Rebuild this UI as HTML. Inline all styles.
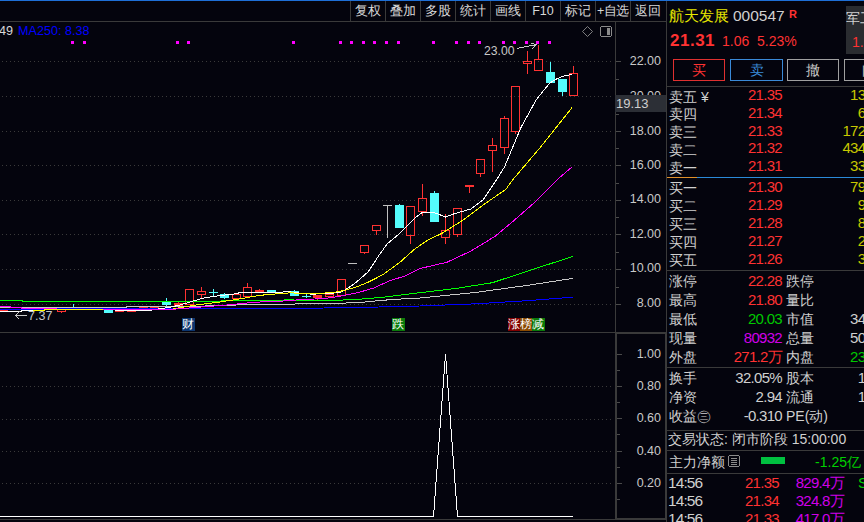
<!DOCTYPE html>
<html><head><meta charset="utf-8">
<style>
*{margin:0;padding:0;box-sizing:border-box}
html,body{width:864px;height:522px;overflow:hidden;background:#04040d;font-family:"Liberation Sans",sans-serif;color:#d0d0d0}
.a{position:absolute;white-space:nowrap;line-height:1}
.tb{position:absolute;top:1px;height:20px;width:35px;border-left:1px solid #3a3a3a;font-size:12.5px;line-height:20px;text-align:center;color:#d8d8d8}
.lbl{position:absolute;font-size:14px;line-height:18px;color:#d0d0d0}
.ax{position:absolute;font-size:12.5px;line-height:13px;color:#c8c8c8;text-align:right;width:40px}
.red{color:#ff3232}.grn{color:#00e000}.yel{color:#e0e000}.pur{color:#c000ff}
</style></head><body>
<svg width="864" height="522" style="position:absolute;left:0;top:0" shape-rendering="crispEdges">
<rect x="0" y="0" width="864" height="1" fill="#1e6fd6"/>
<rect x="0" y="21" width="666" height="1" fill="#3a3a3a"/>
<rect x="615" y="22" width="1" height="498" fill="#3a3a3a"/>
<rect x="0" y="332" width="666" height="1" fill="#3a3a3a"/>
<rect x="615" y="333" width="51" height="1" fill="#3a3a3a"/>
<rect x="616" y="333" width="1" height="186" fill="#3a3a3a"/>
<rect x="665" y="333" width="1" height="186" fill="#3a3a3a"/>
<rect x="0" y="519" width="666" height="1" fill="#3a3a3a"/>
<rect x="616" y="518" width="50" height="1" fill="#3a3a3a"/>
<rect x="666" y="1" width="1" height="521" fill="#3a3a3a"/>
<line x1="0" y1="61.5" x2="612" y2="61.5" stroke="#3a3a3a" stroke-width="1" stroke-dasharray="1 3" stroke-dashoffset="-2"/>
<line x1="0" y1="96.5" x2="612" y2="96.5" stroke="#3a3a3a" stroke-width="1" stroke-dasharray="1 3" stroke-dashoffset="-2"/>
<line x1="0" y1="131.5" x2="612" y2="131.5" stroke="#3a3a3a" stroke-width="1" stroke-dasharray="1 3" stroke-dashoffset="-2"/>
<line x1="0" y1="165.5" x2="612" y2="165.5" stroke="#3a3a3a" stroke-width="1" stroke-dasharray="1 3" stroke-dashoffset="-2"/>
<line x1="0" y1="200.5" x2="612" y2="200.5" stroke="#3a3a3a" stroke-width="1" stroke-dasharray="1 3" stroke-dashoffset="-2"/>
<line x1="0" y1="234.5" x2="612" y2="234.5" stroke="#3a3a3a" stroke-width="1" stroke-dasharray="1 3" stroke-dashoffset="-2"/>
<line x1="0" y1="269.5" x2="612" y2="269.5" stroke="#3a3a3a" stroke-width="1" stroke-dasharray="1 3" stroke-dashoffset="-2"/>
<line x1="0" y1="304.5" x2="612" y2="304.5" stroke="#3a3a3a" stroke-width="1" stroke-dasharray="1 3" stroke-dashoffset="-2"/>
<line x1="0" y1="386.5" x2="612" y2="386.5" stroke="#3a3a3a" stroke-width="1" stroke-dasharray="1 3" stroke-dashoffset="-2"/>
<line x1="0" y1="419.5" x2="612" y2="419.5" stroke="#3a3a3a" stroke-width="1" stroke-dasharray="1 3" stroke-dashoffset="-2"/>
<line x1="0" y1="451.5" x2="612" y2="451.5" stroke="#3a3a3a" stroke-width="1" stroke-dasharray="1 3" stroke-dashoffset="-2"/>
<line x1="0" y1="483.5" x2="612" y2="483.5" stroke="#3a3a3a" stroke-width="1" stroke-dasharray="1 3" stroke-dashoffset="-2"/>
<rect x="616" y="61" width="5" height="1" fill="#4a4a4a"/>
<rect x="616" y="96" width="5" height="1" fill="#4a4a4a"/>
<rect x="616" y="131" width="5" height="1" fill="#4a4a4a"/>
<rect x="616" y="165" width="5" height="1" fill="#4a4a4a"/>
<rect x="616" y="200" width="5" height="1" fill="#4a4a4a"/>
<rect x="616" y="234" width="5" height="1" fill="#4a4a4a"/>
<rect x="616" y="269" width="5" height="1" fill="#4a4a4a"/>
<rect x="616" y="304" width="5" height="1" fill="#4a4a4a"/>
<rect x="616" y="79" width="3" height="1" fill="#4a4a4a"/>
<rect x="616" y="114" width="3" height="1" fill="#4a4a4a"/>
<rect x="616" y="148" width="3" height="1" fill="#4a4a4a"/>
<rect x="616" y="183" width="3" height="1" fill="#4a4a4a"/>
<rect x="616" y="217" width="3" height="1" fill="#4a4a4a"/>
<rect x="616" y="252" width="3" height="1" fill="#4a4a4a"/>
<rect x="616" y="287" width="3" height="1" fill="#4a4a4a"/>
<rect x="617" y="354" width="5" height="1" fill="#4a4a4a"/>
<rect x="617" y="370" width="3" height="1" fill="#4a4a4a"/>
<rect x="617" y="386" width="5" height="1" fill="#4a4a4a"/>
<rect x="617" y="402" width="3" height="1" fill="#4a4a4a"/>
<rect x="617" y="418" width="5" height="1" fill="#4a4a4a"/>
<rect x="617" y="434" width="3" height="1" fill="#4a4a4a"/>
<rect x="617" y="451" width="5" height="1" fill="#4a4a4a"/>
<rect x="617" y="467" width="3" height="1" fill="#4a4a4a"/>
<rect x="617" y="483" width="5" height="1" fill="#4a4a4a"/>
<rect x="617" y="499" width="3" height="1" fill="#4a4a4a"/>
<rect x="71" y="41" width="3" height="3" fill="#ff00ff"/>
<rect x="83" y="41" width="3" height="3" fill="#ff00ff"/>
<rect x="176" y="41" width="3" height="3" fill="#ff00ff"/>
<rect x="187" y="41" width="3" height="3" fill="#ff00ff"/>
<rect x="292" y="41" width="3" height="3" fill="#ff00ff"/>
<rect x="339" y="41" width="3" height="3" fill="#ff00ff"/>
<rect x="350" y="41" width="3" height="3" fill="#ff00ff"/>
<rect x="362" y="41" width="3" height="3" fill="#ff00ff"/>
<rect x="373" y="41" width="3" height="3" fill="#ff00ff"/>
<rect x="385" y="41" width="3" height="3" fill="#ff00ff"/>
<rect x="397" y="41" width="3" height="3" fill="#ff00ff"/>
<rect x="432" y="41" width="3" height="3" fill="#ff00ff"/>
<rect x="455" y="41" width="3" height="3" fill="#ff00ff"/>
<rect x="467" y="41" width="3" height="3" fill="#ff00ff"/>
<rect x="478" y="41" width="3" height="3" fill="#ff00ff"/>
<rect x="502" y="41" width="3" height="3" fill="#ff00ff"/>
<rect x="513" y="41" width="3" height="3" fill="#ff00ff"/>
<rect x="525" y="41" width="3" height="3" fill="#ff00ff"/>
<rect x="536" y="41" width="3" height="3" fill="#ff00ff"/>
<rect x="548" y="41" width="3" height="3" fill="#ff00ff"/>
<rect x="-1" y="309" width="9" height="3" fill="#ff3232"/>
<rect x="22" y="308" width="9" height="2" fill="#ff3232"/>
<rect x="61" y="312" width="1" height="1" fill="#ff3232"/>
<rect x="57.5" y="309.5" width="8" height="2" fill="none" stroke="#ff3232" stroke-width="1"/>
<rect x="73" y="304" width="1" height="2" fill="#54fcfc"/>
<rect x="73" y="304" width="1" height="3" fill="#54fcfc"/>
<rect x="104" y="310" width="9" height="3" fill="#54fcfc"/>
<rect x="115" y="311" width="9" height="1" fill="#ff3232"/>
<rect x="127" y="311" width="9" height="1" fill="#ff3232"/>
<rect x="139" y="307" width="9" height="1" fill="#ff3232"/>
<rect x="150" y="307" width="9" height="1" fill="#ff3232"/>
<rect x="166" y="298" width="1" height="4" fill="#54fcfc"/>
<rect x="166" y="305" width="1" height="1" fill="#54fcfc"/>
<rect x="162" y="302" width="9" height="3" fill="#54fcfc"/>
<rect x="178" y="302" width="1" height="1" fill="#ff3232"/>
<rect x="174" y="303" width="9" height="3" fill="#ff3232"/>
<rect x="185.5" y="289.5" width="8" height="15" fill="none" stroke="#ff3232" stroke-width="1"/>
<rect x="201" y="287" width="1" height="4" fill="#ff3232"/>
<rect x="201" y="295" width="1" height="3" fill="#ff3232"/>
<rect x="197.5" y="291.5" width="8" height="3" fill="none" stroke="#ff3232" stroke-width="1"/>
<rect x="213" y="289" width="1" height="3" fill="#54fcfc"/>
<rect x="213" y="293" width="1" height="3" fill="#54fcfc"/>
<rect x="209" y="292" width="9" height="1" fill="#54fcfc"/>
<rect x="224" y="293" width="1" height="1" fill="#54fcfc"/>
<rect x="224" y="298" width="1" height="1" fill="#54fcfc"/>
<rect x="220" y="294" width="9" height="4" fill="#54fcfc"/>
<rect x="232.5" y="294.5" width="8" height="4" fill="none" stroke="#ff3232" stroke-width="1"/>
<rect x="247" y="283" width="1" height="4" fill="#ff3232"/>
<rect x="243.5" y="287.5" width="8" height="9" fill="none" stroke="#ff3232" stroke-width="1"/>
<rect x="259" y="289" width="1" height="1" fill="#ff3232"/>
<rect x="255" y="290" width="9" height="3" fill="#ff3232"/>
<rect x="267" y="290" width="9" height="3" fill="#54fcfc"/>
<rect x="294" y="290" width="1" height="1" fill="#54fcfc"/>
<rect x="290" y="291" width="9" height="5" fill="#54fcfc"/>
<rect x="306" y="294" width="1" height="2" fill="#54fcfc"/>
<rect x="306" y="297" width="1" height="1" fill="#54fcfc"/>
<rect x="302" y="296" width="9" height="1" fill="#54fcfc"/>
<rect x="317" y="298" width="1" height="2" fill="#ff3232"/>
<rect x="313" y="295" width="9" height="3" fill="#ff3232"/>
<rect x="325.5" y="294.5" width="8" height="2" fill="none" stroke="#ff3232" stroke-width="1"/>
<rect x="337.5" y="279.5" width="8" height="16" fill="none" stroke="#ff3232" stroke-width="1"/>
<rect x="348" y="263" width="9" height="1" fill="#c0c0c0"/>
<rect x="364" y="253" width="1" height="1" fill="#ff3232"/>
<rect x="360.5" y="245.5" width="8" height="7" fill="none" stroke="#ff3232" stroke-width="1"/>
<rect x="376" y="231" width="1" height="4" fill="#ff3232"/>
<rect x="372.5" y="225.5" width="8" height="5" fill="none" stroke="#ff3232" stroke-width="1"/>
<rect x="387" y="206" width="1" height="32" fill="#c0c0c0"/>
<rect x="383" y="205" width="9" height="1" fill="#c0c0c0"/>
<rect x="399" y="204" width="1" height="1" fill="#54fcfc"/>
<rect x="395" y="205" width="9" height="23" fill="#54fcfc"/>
<rect x="410" y="236" width="1" height="8" fill="#ff3232"/>
<rect x="406.5" y="206.5" width="8" height="29" fill="none" stroke="#ff3232" stroke-width="1"/>
<rect x="422" y="184" width="1" height="14" fill="#ff3232"/>
<rect x="422" y="212" width="1" height="4" fill="#ff3232"/>
<rect x="418.5" y="198.5" width="8" height="13" fill="none" stroke="#ff3232" stroke-width="1"/>
<rect x="434" y="191" width="1" height="2" fill="#54fcfc"/>
<rect x="430" y="193" width="9" height="29" fill="#54fcfc"/>
<rect x="445" y="214" width="1" height="16" fill="#ff3232"/>
<rect x="445" y="238" width="1" height="6" fill="#ff3232"/>
<rect x="441.5" y="230.5" width="8" height="7" fill="none" stroke="#ff3232" stroke-width="1"/>
<rect x="457" y="235" width="1" height="2" fill="#ff3232"/>
<rect x="453.5" y="208.5" width="8" height="26" fill="none" stroke="#ff3232" stroke-width="1"/>
<rect x="469" y="187" width="1" height="6" fill="#ff3232"/>
<rect x="465" y="185" width="9" height="2" fill="#ff3232"/>
<rect x="480" y="174" width="1" height="3" fill="#ff3232"/>
<rect x="476.5" y="159.5" width="8" height="14" fill="none" stroke="#ff3232" stroke-width="1"/>
<rect x="492" y="138" width="1" height="7" fill="#ff3232"/>
<rect x="492" y="151" width="1" height="21" fill="#ff3232"/>
<rect x="488.5" y="145.5" width="8" height="5" fill="none" stroke="#ff3232" stroke-width="1"/>
<rect x="504" y="116" width="1" height="2" fill="#ff3232"/>
<rect x="504" y="148" width="1" height="6" fill="#ff3232"/>
<rect x="500.5" y="118.5" width="8" height="29" fill="none" stroke="#ff3232" stroke-width="1"/>
<rect x="515" y="132" width="1" height="2" fill="#ff3232"/>
<rect x="511.5" y="86.5" width="8" height="45" fill="none" stroke="#ff3232" stroke-width="1"/>
<rect x="527" y="51" width="1" height="10" fill="#ff3232"/>
<rect x="527" y="64" width="1" height="10" fill="#ff3232"/>
<rect x="523.5" y="61.5" width="8" height="2" fill="none" stroke="#ff3232" stroke-width="1"/>
<rect x="538" y="45" width="1" height="14" fill="#ff3232"/>
<rect x="534.5" y="59.5" width="8" height="11" fill="none" stroke="#ff3232" stroke-width="1"/>
<rect x="550" y="62" width="1" height="10" fill="#54fcfc"/>
<rect x="546" y="72" width="9" height="11" fill="#54fcfc"/>
<rect x="562" y="92" width="1" height="4" fill="#54fcfc"/>
<rect x="558" y="79" width="9" height="13" fill="#54fcfc"/>
<rect x="573" y="66" width="1" height="7" fill="#ff3232"/>
<rect x="569.5" y="73.5" width="8" height="22" fill="none" stroke="#ff3232" stroke-width="1"/>
</svg>
<svg width="864" height="522" style="position:absolute;left:0;top:0" shape-rendering="crispEdges">
<polyline points="0,309.5 56,309.5 56,308.5 290,308.5 357.9,307.5 420,306 473.6,303.9 527.3,300.7 572.9,297.2" fill="none" stroke="#0000ff" stroke-width="1"/>
<polyline points="0,307.5 126,307.5 126,306.5 170,306.5 218.6,305.8 242.2,304.7 290,304.2 312,303.3 357.9,302.9 369.7,301.5 382.2,300.4 393.3,299.4 420,298 473.6,292.7 527.3,285.4 572.9,278.4" fill="none" stroke="#c8c8c8" stroke-width="1"/>
<polyline points="0,300.5 22,300.5 22,301.5 170,301.5 242.2,300.8 290,299.9 323.9,300.8 357.9,299.4 369.7,298.3 382.2,297.4 396.1,295.6 420,292.7 454.9,288.6 492.4,282.7 527.3,271.2 572.9,256.4" fill="none" stroke="#00ff00" stroke-width="1"/>
<polyline points="0,311.5 21,311.5 21,310.5 44,310.5 44,309.5 115,309.5 115,310.5 148,310.5 169,307.5 180,305 195,300.5 204.7,297.8 218.6,295.7 232.5,294.3 242.2,292.2 277,292.2 290,291.8 303,293.6 312.8,294.2 332.2,293.2 342,291.8 348.9,287.6 357.2,281.4 368.3,271.7 378.6,255.9 387.2,243.8 397.6,235.2 406.2,226.6 414,218.8 421.7,212.8 433.8,212.4 445.5,217 454.9,213.5 471,209 483,200 496.4,180 504.5,166.9 520.8,127.8 536.1,100 541.1,93.6 549.8,83 557.3,78.6 563.5,76.1 572.3,74.3" fill="none" stroke="#ffffff" stroke-width="1"/>
<polyline points="33,310.5 44,310.5 44,309.5 170,309.5 181,307.5 197.8,304.7 215.8,302.6 229.7,300.5 242.2,298.5 253.3,296.4 265.8,294.7 277,293.9 290,292.8 304.4,293.6 332.2,292.8 344.7,290.4 357.2,286.7 368.3,282.1 382.2,275.1 399.3,262.8 414.8,249 428.6,239.5 441.5,233.6 462.9,220.2 484.4,204.1 505.8,189.4 512.5,180 540.4,147.3 572,107.6" fill="none" stroke="#ffff00" stroke-width="1"/>
<polyline points="0,306.5 10,306.5 10,307.5 21,307.5 21,308.5 56,308.5 56,309.5 170,309.5 195,307.5 231,304.7 242.2,303.3 253.3,302.6 265.8,301.5 290,300.8 300.3,299.4 323.9,298.75 343.3,295.6 357.2,292.8 373.9,288 390.6,280.3 405,276.1 420,268.5 446.8,262.3 471,251 495.1,236.3 511.2,222.9 532.7,204.1 556.8,180 572,166.9" fill="none" stroke="#ff00ff" stroke-width="1"/>
<rect x="56" y="309" width="47" height="1" fill="#ffff00"/>
<polyline points="0,516.5 433.5,516.5 445.5,354 457.5,516.5 573,516.5" fill="none" stroke="#ffffff" stroke-width="1"/>
<path d="M15.5,315.5 L27,315.5 M19.5,311.5 L15.5,315.5 L19.5,319.5" stroke="#c8c8c8" stroke-width="1" fill="none"/>
<path d="M517,48.5 L536,44.5 M531,43 L536,44.5 L532,49" stroke="#c8c8c8" stroke-width="1" fill="none"/>
<path d="M582.5,31.5 L587.5,26.5 L592.5,31.5 L587.5,36.5 Z" stroke="#8a8a8a" stroke-width="0.9" fill="none" shape-rendering="geometricPrecision"/>
<rect x="600.5" y="26.5" width="11" height="10" rx="2" stroke="#8a8a8a" stroke-width="1" fill="none"/>
<rect x="607" y="28" width="3" height="7" fill="#8a8a8a"/>
</svg>
<!-- toolbar -->
<div class="tb" style="left:350px">复权</div>
<div class="tb" style="left:385px">叠加</div>
<div class="tb" style="left:420px">多股</div>
<div class="tb" style="left:455px">统计</div>
<div class="tb" style="left:490px">画线</div>
<div class="tb" style="left:525px">F10</div>
<div class="tb" style="left:560px">标记</div>
<div class="tb" style="left:595px;letter-spacing:-0.5px">+自选</div>
<div class="tb" style="left:630px">返回</div>
<!-- MA text -->
<div class="a" style="left:-1px;top:25px;font-size:12.6px;color:#d8d8d8">49</div>
<div class="a" style="left:18px;top:25px;font-size:12.6px;color:#0000ff">MA250: 8.38</div>
<div class="a" style="left:484px;top:45px;font-size:12.2px;color:#c8c8c8">23.00</div>
<div class="a" style="left:28px;top:310px;font-size:12.5px;color:#c8c8c8">7.37</div>
<!-- axis labels -->
<div class="ax" style="left:621px;top:55px">22.00</div>
<div class="ax" style="left:621px;top:125px">18.00</div>
<div class="ax" style="left:621px;top:159px">16.00</div>
<div class="ax" style="left:621px;top:193px">14.00</div>
<div class="ax" style="left:621px;top:228px">12.00</div>
<div class="ax" style="left:621px;top:262px">10.00</div>
<div class="ax" style="left:621px;top:297px">8.00</div>
<div class="ax" style="left:621px;top:90px">20.00</div>
<div class="a" style="left:615px;top:95px;width:51px;height:17px;background:#2c2f36;font-size:13px;line-height:17px;color:#d0d0d0;padding-left:1px">19.13</div>
<div class="ax" style="left:621px;top:348px">1.00</div>
<div class="ax" style="left:621px;top:380px">0.80</div>
<div class="ax" style="left:621px;top:412px">0.60</div>
<div class="ax" style="left:621px;top:445px">0.40</div>
<div class="ax" style="left:621px;top:477px">0.20</div>
<!-- signal labels -->
<div class="a" style="left:182px;top:318px;width:13px;height:13px;background:#0c3670;font-size:12px;line-height:13px;color:#fff">财</div>
<div class="a" style="left:392px;top:318px;width:13px;height:13px;background:#0a7a0a;font-size:12px;line-height:13px;color:#fff">跌</div>
<div class="a" style="left:508px;top:318px;width:12px;height:13px;background:#800000;font-size:12px;line-height:13px;color:#fff">涨</div>
<div class="a" style="left:520px;top:318px;width:12px;height:13px;background:#8a4a00;font-size:12px;line-height:13px;color:#fff">榜</div>
<div class="a" style="left:532px;top:318px;width:13px;height:13px;background:#0a7a0a;font-size:12px;line-height:13px;color:#fff">减</div>
<!-- right panel -->
<div class="a yel" style="left:669px;top:7px;font-size:15px;line-height:17px;color:#e8e800">航天发展</div>
<div class="a" style="left:733px;top:7px;font-size:15.5px;line-height:17px;color:#d0d0d0">000547</div>
<div class="a red" style="left:789px;top:9px;font-size:11px;font-weight:bold">R</div>
<div class="a" style="left:846px;top:6px;width:18px;height:48px;background:#2a2c30"></div>
<div class="a" style="left:846px;top:11px;font-size:14px;color:#d0d0d0">军工</div>
<div class="a red" style="left:852px;top:35px;font-size:14px">1.6</div>
<div class="a red" style="left:670px;top:32px;font-size:17px;font-weight:bold;letter-spacing:0.5px">21.31</div>
<div class="a red" style="left:722px;top:34px;font-size:14px">1.06</div>
<div class="a red" style="left:757px;top:34px;font-size:14px">5.23%</div>
<div class="a" style="left:673px;top:59px;width:52px;height:22px;border:1px solid #e03030;color:#ff3232;font-size:14px;line-height:20px;text-align:center">买</div>
<div class="a" style="left:730px;top:59px;width:53px;height:22px;border:1px solid #3a8ad8;color:#3a8ad8;font-size:14px;line-height:20px;text-align:center">卖</div>
<div class="a" style="left:787px;top:59px;width:52px;height:22px;border:1px solid #a0a0a0;color:#c8c8c8;font-size:14px;line-height:20px;text-align:center">撤</div>
<div class="a" style="left:844px;top:59px;width:30px;height:22px;border:1px solid #a0a0a0;color:#c8c8c8;font-size:14px;line-height:20px;padding-left:17px;overflow:hidden">闪</div>
<svg width="864" height="522" style="position:absolute;left:0;top:0" shape-rendering="crispEdges">
<rect x="667" y="86" width="197" height="1" fill="#3a3a3a"/>
<rect x="667" y="177" width="30" height="1" fill="#e0902a"/>
<rect x="697" y="177" width="167" height="1" fill="#2a8ad8"/>
<rect x="667" y="270" width="197" height="1" fill="#3a3a3a"/>
<rect x="667" y="367" width="197" height="1" fill="#3a3a3a"/>
<rect x="667" y="430" width="197" height="1" fill="#3a3a3a"/>
<rect x="667" y="450" width="197" height="1" fill="#3a3a3a"/>
<rect x="667" y="473" width="197" height="1" fill="#3a3a3a"/>
<rect x="761" y="457" width="24" height="7" fill="#00c040"/>
</svg>
<div class="a" style="left:669px;top:87.5px;font-size:14px;line-height:18px;color:#d0d0d0;">卖五 ¥</div>
<div class="a" style="right:82px;top:86.3px;font-size:15px;line-height:18px;color:#ff3232;letter-spacing:-0.7px">21.35</div>
<div class="a" style="right:-9px;top:86.3px;font-size:15px;line-height:18px;color:#c8c800;letter-spacing:-0.7px">136</div>
<div class="a" style="left:669px;top:105.3px;font-size:14px;line-height:18px;color:#d0d0d0;">卖四</div>
<div class="a" style="right:82px;top:104.1px;font-size:15px;line-height:18px;color:#ff3232;letter-spacing:-0.7px">21.34</div>
<div class="a" style="right:-9px;top:104.1px;font-size:15px;line-height:18px;color:#c8c800;letter-spacing:-0.7px">60</div>
<div class="a" style="left:669px;top:123.0px;font-size:14px;line-height:18px;color:#d0d0d0;">卖三</div>
<div class="a" style="right:82px;top:121.80000000000001px;font-size:15px;line-height:18px;color:#ff3232;letter-spacing:-0.7px">21.33</div>
<div class="a" style="right:-9px;top:121.80000000000001px;font-size:15px;line-height:18px;color:#c8c800;letter-spacing:-0.7px">1720</div>
<div class="a" style="left:669px;top:140.5px;font-size:14px;line-height:18px;color:#d0d0d0;">卖二</div>
<div class="a" style="right:82px;top:139.3px;font-size:15px;line-height:18px;color:#ff3232;letter-spacing:-0.7px">21.32</div>
<div class="a" style="right:-9px;top:139.3px;font-size:15px;line-height:18px;color:#c8c800;letter-spacing:-0.7px">4340</div>
<div class="a" style="left:669px;top:158.5px;font-size:14px;line-height:18px;color:#d0d0d0;">卖一</div>
<div class="a" style="right:82px;top:157.3px;font-size:15px;line-height:18px;color:#ff3232;letter-spacing:-0.7px">21.31</div>
<div class="a" style="right:-9px;top:157.3px;font-size:15px;line-height:18px;color:#c8c800;letter-spacing:-0.7px">330</div>
<div class="a" style="left:669px;top:178.9px;font-size:14px;line-height:18px;color:#d0d0d0;">买一</div>
<div class="a" style="right:82px;top:177.70000000000002px;font-size:15px;line-height:18px;color:#ff3232;letter-spacing:-0.7px">21.30</div>
<div class="a" style="right:-9px;top:177.70000000000002px;font-size:15px;line-height:18px;color:#c8c800;letter-spacing:-0.7px">790</div>
<div class="a" style="left:669px;top:197.1px;font-size:14px;line-height:18px;color:#d0d0d0;">买二</div>
<div class="a" style="right:82px;top:195.9px;font-size:15px;line-height:18px;color:#ff3232;letter-spacing:-0.7px">21.29</div>
<div class="a" style="right:-9px;top:195.9px;font-size:15px;line-height:18px;color:#c8c800;letter-spacing:-0.7px">90</div>
<div class="a" style="left:669px;top:215.0px;font-size:14px;line-height:18px;color:#d0d0d0;">买三</div>
<div class="a" style="right:82px;top:213.8px;font-size:15px;line-height:18px;color:#ff3232;letter-spacing:-0.7px">21.28</div>
<div class="a" style="right:-9px;top:213.8px;font-size:15px;line-height:18px;color:#c8c800;letter-spacing:-0.7px">80</div>
<div class="a" style="left:669px;top:233.2px;font-size:14px;line-height:18px;color:#d0d0d0;">买四</div>
<div class="a" style="right:82px;top:232.0px;font-size:15px;line-height:18px;color:#ff3232;letter-spacing:-0.7px">21.27</div>
<div class="a" style="right:-9px;top:232.0px;font-size:15px;line-height:18px;color:#c8c800;letter-spacing:-0.7px">20</div>
<div class="a" style="left:669px;top:251.0px;font-size:14px;line-height:18px;color:#d0d0d0;">买五</div>
<div class="a" style="right:82px;top:249.8px;font-size:15px;line-height:18px;color:#ff3232;letter-spacing:-0.7px">21.26</div>
<div class="a" style="right:-9px;top:249.8px;font-size:15px;line-height:18px;color:#c8c800;letter-spacing:-0.7px">30</div>
<div class="a" style="left:669px;top:272.1px;font-size:14px;line-height:18px;color:#d0d0d0;">涨停</div>
<div class="a" style="right:82px;top:272.1px;font-size:15px;line-height:18px;color:#ff3232;letter-spacing:-0.7px">22.28</div>
<div class="a" style="left:786px;top:272.1px;font-size:14px;line-height:18px;color:#d0d0d0;">跌停</div>
<div class="a" style="right:-9px;top:272.1px;font-size:15px;line-height:18px;color:#d0d0d0;letter-spacing:-0.7px"></div>
<div class="a" style="left:669px;top:291.3px;font-size:14px;line-height:18px;color:#d0d0d0;">最高</div>
<div class="a" style="right:82px;top:291.3px;font-size:15px;line-height:18px;color:#ff3232;letter-spacing:-0.7px">21.80</div>
<div class="a" style="left:786px;top:291.3px;font-size:14px;line-height:18px;color:#d0d0d0;">量比</div>
<div class="a" style="right:-9px;top:291.3px;font-size:15px;line-height:18px;color:#d0d0d0;letter-spacing:-0.7px"></div>
<div class="a" style="left:669px;top:309.9px;font-size:14px;line-height:18px;color:#d0d0d0;">最低</div>
<div class="a" style="right:82px;top:309.9px;font-size:15px;line-height:18px;color:#00c800;letter-spacing:-0.7px">20.03</div>
<div class="a" style="left:786px;top:309.9px;font-size:14px;line-height:18px;color:#d0d0d0;">市值</div>
<div class="a" style="right:-9px;top:309.9px;font-size:15px;line-height:18px;color:#d0d0d0;letter-spacing:-0.7px">345</div>
<div class="a" style="left:669px;top:328.6px;font-size:14px;line-height:18px;color:#d0d0d0;">现量</div>
<div class="a" style="right:82px;top:328.6px;font-size:15px;line-height:18px;color:#d000e8;letter-spacing:-0.7px">80932</div>
<div class="a" style="left:786px;top:328.6px;font-size:14px;line-height:18px;color:#d0d0d0;">总量</div>
<div class="a" style="right:-9px;top:328.6px;font-size:15px;line-height:18px;color:#d0d0d0;letter-spacing:-0.7px">502</div>
<div class="a" style="left:669px;top:347.7px;font-size:14px;line-height:18px;color:#d0d0d0;">外盘</div>
<div class="a" style="right:82px;top:347.7px;font-size:15px;line-height:18px;color:#ff3232;letter-spacing:-0.7px">271.2万</div>
<div class="a" style="left:786px;top:347.7px;font-size:14px;line-height:18px;color:#d0d0d0;">内盘</div>
<div class="a" style="right:-9px;top:347.7px;font-size:15px;line-height:18px;color:#00c800;letter-spacing:-0.7px">231</div>
<div class="a" style="left:669px;top:369.1px;font-size:14px;line-height:18px;color:#d0d0d0;">换手</div>
<div class="a" style="right:82px;top:369.1px;font-size:15px;line-height:18px;color:#d0d0d0;letter-spacing:-0.7px">32.05%</div>
<div class="a" style="left:786px;top:369.1px;font-size:14px;line-height:18px;color:#d0d0d0;">股本</div>
<div class="a" style="right:-9px;top:369.1px;font-size:15px;line-height:18px;color:#d0d0d0;letter-spacing:-0.7px">10</div>
<div class="a" style="left:669px;top:387.7px;font-size:14px;line-height:18px;color:#d0d0d0;">净资</div>
<div class="a" style="right:82px;top:387.7px;font-size:15px;line-height:18px;color:#d0d0d0;letter-spacing:-0.7px">2.94</div>
<div class="a" style="left:786px;top:387.7px;font-size:14px;line-height:18px;color:#d0d0d0;">流通</div>
<div class="a" style="right:-9px;top:387.7px;font-size:15px;line-height:18px;color:#d0d0d0;letter-spacing:-0.7px">10</div>
<div class="a" style="left:669px;top:406.7px;font-size:14px;line-height:18px;color:#d0d0d0;">收益㊂</div>
<div class="a" style="right:82px;top:406.7px;font-size:15px;line-height:18px;color:#d0d0d0;letter-spacing:-0.7px">-0.310</div>
<div class="a" style="left:786px;top:406.7px;font-size:14px;line-height:18px;color:#d0d0d0;">PE(动)</div>
<div class="a" style="right:-9px;top:406.7px;font-size:15px;line-height:18px;color:#d0d0d0;letter-spacing:-0.7px"></div>
<div class="a" style="left:668px;top:430.3px;font-size:14px;line-height:18px;color:#d0d0d0;">交易状态: 闭市阶段 15:00:00</div>
<div class="a" style="left:669px;top:452.5px;font-size:14px;line-height:18px;color:#d0d0d0;">主力净额</div>
<svg style="position:absolute;left:728px;top:455px" width="13" height="13" shape-rendering="crispEdges"><rect x="0.5" y="0.5" width="11" height="11" rx="2" fill="none" stroke="#8a8a8a"/><rect x="3" y="3" width="6" height="1" fill="#8a8a8a"/><rect x="3" y="5" width="6" height="1" fill="#8a8a8a"/><rect x="3" y="7" width="6" height="1" fill="#8a8a8a"/><rect x="3" y="9" width="6" height="1" fill="#8a8a8a"/></svg>
<div class="a" style="right:3px;top:452.5px;font-size:14px;line-height:18px;color:#00d000;">-1.25亿</div>
<div class="a" style="left:668px;top:474.1px;font-size:15.5px;line-height:18px;color:#d0d0d0;letter-spacing:-0.9px">14:56</div>
<div class="a" style="right:85px;top:474.1px;font-size:15px;line-height:18px;color:#ff3232;letter-spacing:-0.7px">21.35</div>
<div class="a" style="right:20px;top:474.1px;font-size:15px;line-height:18px;color:#d000e8;letter-spacing:-0.7px">829.4万</div>
<div class="a" style="left:668px;top:492.1px;font-size:15.5px;line-height:18px;color:#d0d0d0;letter-spacing:-0.9px">14:56</div>
<div class="a" style="right:85px;top:492.1px;font-size:15px;line-height:18px;color:#ff3232;letter-spacing:-0.7px">21.34</div>
<div class="a" style="right:20px;top:492.1px;font-size:15px;line-height:18px;color:#d000e8;letter-spacing:-0.7px">324.8万</div>
<div class="a" style="left:668px;top:510.1px;font-size:15.5px;line-height:18px;color:#d0d0d0;letter-spacing:-0.9px">14:56</div>
<div class="a" style="right:85px;top:510.1px;font-size:15px;line-height:18px;color:#ff3232;letter-spacing:-0.7px">21.33</div>
<div class="a" style="right:20px;top:510.1px;font-size:15px;line-height:18px;color:#d000e8;letter-spacing:-0.7px">417.0万</div>
<div class="a" style="left:858px;top:474.1px;font-size:15px;line-height:18px;color:#00d000;">S</div>
</body></html>
